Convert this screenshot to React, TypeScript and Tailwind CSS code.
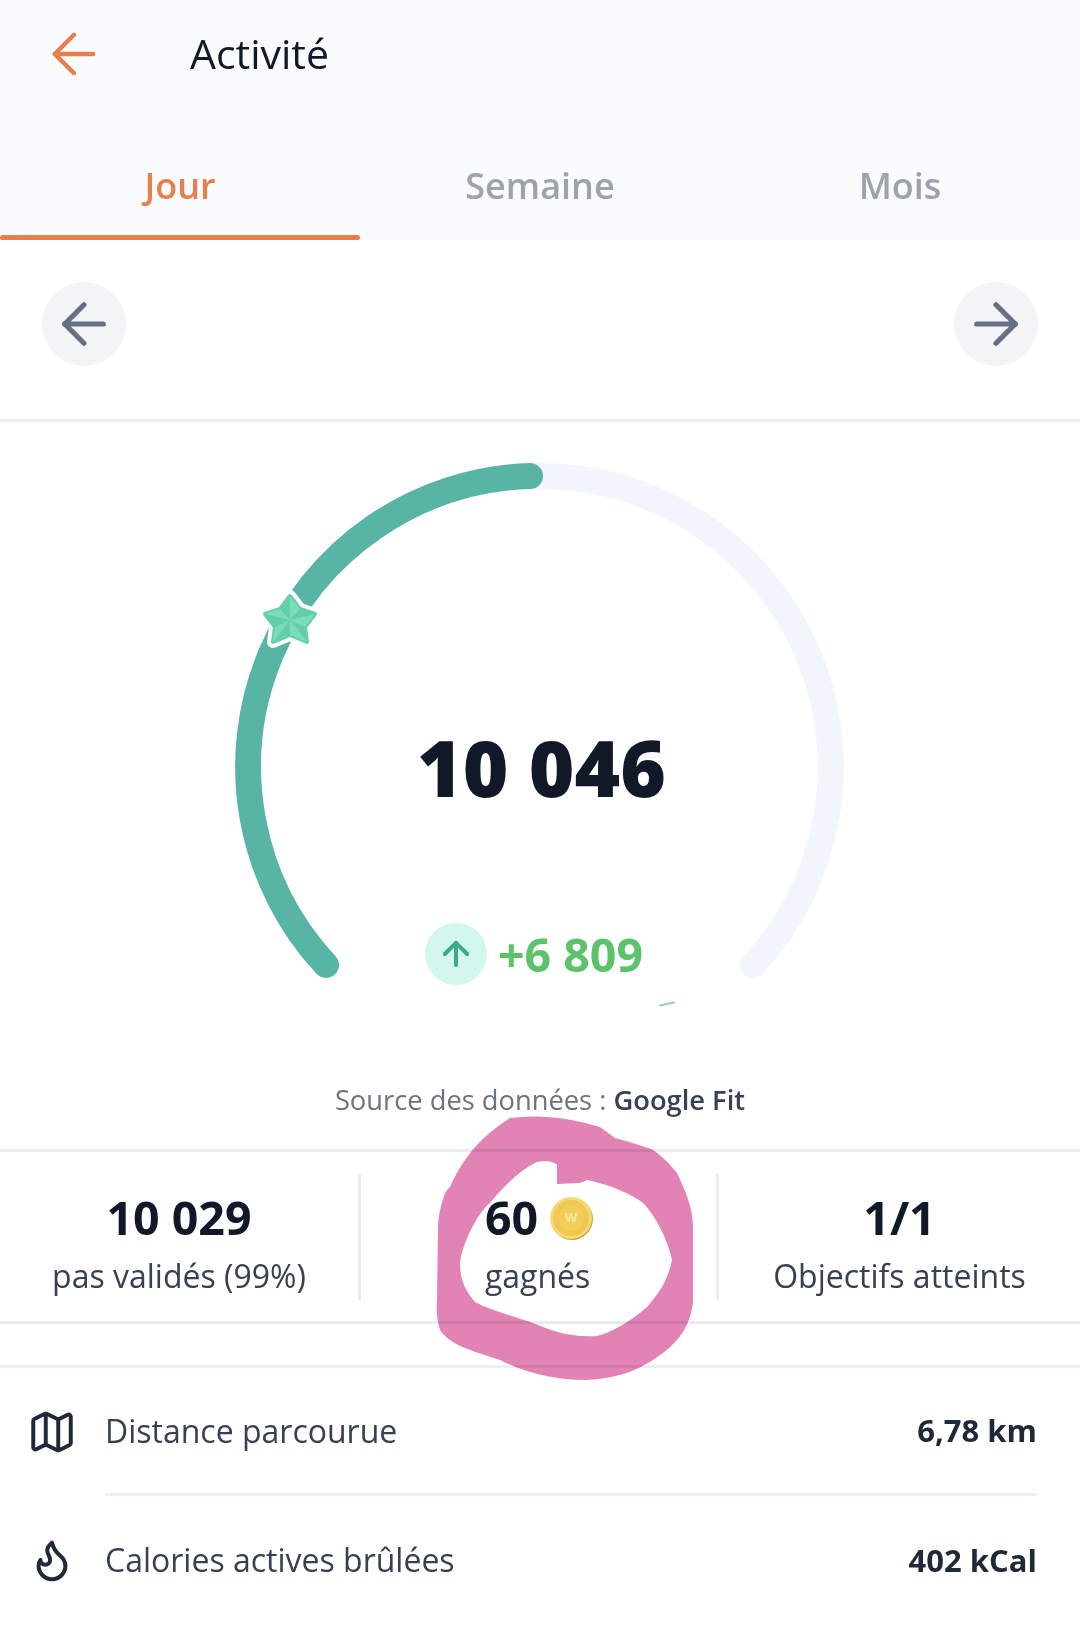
import { ArrowLeft, ArrowRight, ArrowUp, Flame, Map as MapIcon } from "lucide-react";
import type { ReactNode } from "react";

const font = "font-['Open_Sans','Noto_Sans',sans-serif]";

const STAR = "M70 134 L80 147 L95 152 L85 165 L87 180 L70 173 L53 180 L55 165 L45 152 L60 147 Z";

function Tab({ label, active }: { label: string; active?: boolean }) {
  return (
    <div className="relative flex h-[110px] items-start justify-center pt-[31px]">
      <span
        className={`text-[36px] leading-[50px] font-semibold ${active ? "text-[#e77f4b]" : "text-[#9ca3af]"}`}
      >
        {label}
      </span>
      {active && (
        <div className="absolute right-0 bottom-0 left-0 h-[5px] rounded-full bg-[#e77f4b]" />
      )}
    </div>
  );
}

function NavButton({ children }: { children: ReactNode }) {
  return (
    <div className="flex h-[84px] w-[84px] items-center justify-center rounded-full bg-[#f3f4f6] text-[#667085]">
      {children}
    </div>
  );
}

function Gauge() {
  return (
    <svg viewBox="0 0 640 560" className="h-[560px] w-[640px] overflow-visible" fill="none">
      <path d="M 319 14 A 291 291 0 0 1 533 503" stroke="#f2f5fb" strokeWidth="26" strokeLinecap="round" />
      <path d="M 106 503 A 291 291 0 0 1 310 14" stroke="#58b5a5" strokeWidth="26" strokeLinecap="round" />
      <path d={STAR} fill="#ffffff" stroke="#ffffff" strokeWidth="12" strokeLinejoin="round" />
      <path d={STAR} fill="#63cfa9" stroke="#63cfa9" strokeWidth="4" strokeLinejoin="round" />
      <path d="M70 134 L80 147 L70 158 Z M95 152 L85 165 L70 158 Z M87 180 L70 173 L70 158 Z M53 180 L55 165 L70 158 Z M45 152 L60 147 L70 158 Z" fill="#7adcb9" />
    </svg>
  );
}

function Coin() {
  return (
    <div className="flex h-[42px] w-[42px] items-center justify-center rounded-full border-[3px] border-[#f5d976] bg-[#efc94f] shadow-[1px_1px_0_#c9a63a]">
      <div className="flex h-[26px] w-[26px] items-center justify-center rounded-full bg-[#f2cd58] text-[13px] leading-none font-bold text-[#fbe9a8]">
        W
      </div>
    </div>
  );
}

function Stat({ value, label, icon }: { value: string; label: string; icon?: ReactNode }) {
  return (
    <div className="flex h-[126px] flex-col items-center pt-[13px]">
      <div className={icon ? "flex flex-col items-start" : "flex flex-col items-center"}>
        <div className="flex h-[62px] items-center gap-[12px] text-[46.5px] leading-none font-bold text-[#111827]">
          {value}
          {icon}
        </div>
        <div className="text-[32px] leading-[54px] text-[#374151]">{label}</div>
      </div>
    </div>
  );
}

function Row({ icon, label, value, divider }: { icon: ReactNode; label: string; value: string; divider?: boolean }) {
  return (
    <div className="flex">
      <div className="flex w-[105px] items-center justify-center pr-[2px] text-[#1f2937]">{icon}</div>
      <div className={`mr-[43px] flex h-[128px] flex-1 items-center justify-between ${divider ? "border-b-[3px] border-[#eceef1]" : ""}`}>
        <span className="text-[32px] leading-none text-[#374151]">{label}</span>
        <span className="text-[31px] leading-none font-bold text-[#1f2937]">{value}</span>
      </div>
    </div>
  );
}

export default function App() {
  return (
    <div className={`relative h-[1644px] w-[1080px] overflow-hidden bg-white ${font}`}>
      <header className="h-[240px] bg-[#f9fbfd]">
        <div className="flex h-[130px] items-start pt-[28px]">
          <div className="flex w-[190px] justify-start pl-[41px] text-[#e77f4b]">
            <ArrowLeft size={66} strokeWidth={1.6} className="-mt-[7px]" />
          </div>
          <h1 className="text-[41px] leading-[50px] text-[#111827]">Activité</h1>
        </div>
        <div className="grid grid-cols-3">
          <Tab label="Jour" active />
          <Tab label="Semaine" />
          <Tab label="Mois" />
        </div>
      </header>

      <div className="flex h-[182px] items-center justify-between border-b-[3px] border-[#e9ebee] px-[42px] pb-[11px]">
        <NavButton>
          <ArrowLeft size={66} strokeWidth={1.9} />
        </NavButton>
        <NavButton>
          <ArrowRight size={66} strokeWidth={1.9} />
        </NavButton>
      </div>

      <section className="relative flex h-[727px] flex-col items-center">
        <div className="relative mt-[40px] h-[560px] w-[640px]">
          <Gauge />
          <div className="absolute top-[260px] right-0 left-[3px] text-center text-[78px] leading-[90px] font-extrabold text-[#111827]">
            10 046
          </div>
          <div className="absolute top-[461px] left-[205px] flex items-center gap-[11px]">
            <div className="flex h-[62px] w-[62px] items-center justify-center rounded-full bg-[#d3f7ec] text-[#3fa98c]">
              <ArrowUp size={38} strokeWidth={2.6} />
            </div>
            <span className="text-[46.5px] leading-none font-bold text-[#5cc36a]">+6 809</span>
          </div>
          <div className="absolute top-[541px] left-[439px] h-[2px] w-[16px] -rotate-12 bg-[#8fd3bd]" />
        </div>
        <p className="mt-[60px] text-[27.3px] leading-[36px] text-[#6b7280]">
          Source des données : <span className="font-semibold text-[#374151]">Google Fit</span>
        </p>
      </section>

      <div className="grid h-[175px] grid-cols-[358px_361px_1fr] items-center border-y-[3px] border-[#e9ebee]">
        <Stat value="10 029" label="pas validés (99%)" />
        <div className="border-x-[3px] border-[#e9ebee]">
          <Stat value="60" label="gagnés" icon={<Coin />} />
        </div>
        <Stat value="1/1" label="Objectifs atteints" />
      </div>

      <div className="mt-[41px] border-t-[3px] border-[#eceef1]">
        <Row icon={<MapIcon size={50} strokeWidth={1.9} />} label="Distance parcourue" value="6,78 km" divider />
        <Row icon={<Flame size={46} strokeWidth={2.1} />} label="Calories actives brûlées" value="402 kCal" />
      </div>

      {/* felt-pen circle drawn over the screenshot */}
      <svg viewBox="0 0 1080 1644" className="pointer-events-none absolute inset-0 h-[1644px] w-[1080px] mix-blend-multiply">
        <path
          fillRule="evenodd"
          fill="#e283b5"
          d="M510 1118 C540 1114 570 1118 600 1127 L615 1138 C630 1142 643 1146 653 1150 C665 1158 672 1167 677 1173 C685 1190 692 1205 693 1225 L693 1303 C690 1325 680 1340 663 1353 C640 1370 620 1378 587 1380 C560 1380 530 1375 500 1360 C470 1350 450 1345 440 1330 C437 1320 436 1310 437 1300 L438 1225 C440 1205 445 1190 450 1187 C460 1165 475 1140 510 1118 Z M537 1162 C548 1160 556 1163 557 1165 L557 1184 L580 1183 L587 1180 C610 1185 630 1193 643 1203 C655 1215 668 1240 672 1260 C668 1280 660 1292 647 1307 C630 1322 610 1333 597 1336 C570 1338 550 1330 533 1323 C510 1315 490 1310 475 1302 C465 1290 460 1280 460 1263 C463 1240 480 1210 490 1203 C505 1185 520 1170 537 1162 Z"
        />
      </svg>
    </div>
  );
}
